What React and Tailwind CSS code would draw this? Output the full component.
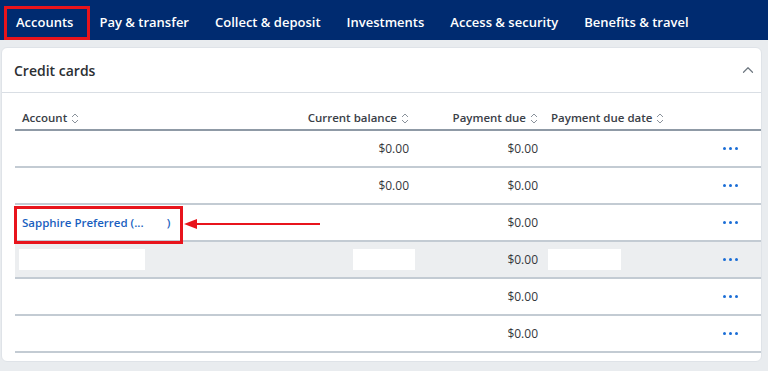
import { ChevronUp } from "lucide-react";

const tabs = [
  "Accounts",
  "Pay & transfer",
  "Collect & deposit",
  "Investments",
  "Access & security",
  "Benefits & travel",
];

function SortIcon() {
  return (
    <svg width="8" height="11" viewBox="0 0 8 11" className="ml-[4px] shrink-0">
      <path d="M1 4 L4 1 L7 4" fill="none" stroke="#8a929b" strokeWidth="1" />
      <path d="M1 7 L4 10 L7 7" fill="none" stroke="#8a929b" strokeWidth="1" />
    </svg>
  );
}

function Dots() {
  return (
    <div className="flex gap-[3px]">
      <span className="w-[3px] h-[3px] rounded-full bg-[#1a6dd6]" />
      <span className="w-[3px] h-[3px] rounded-full bg-[#1a6dd6]" />
      <span className="w-[3px] h-[3px] rounded-full bg-[#1a6dd6]" />
    </div>
  );
}

const rows = [
  { account: "", balance: "$0.00", due: "$0.00" },
  { account: "", balance: "$0.00", due: "$0.00" },
  { account: "sapphire", balance: "", due: "$0.00" },
  { account: "masked", balance: "", due: "$0.00", gray: true },
  { account: "", balance: "", due: "$0.00" },
  { account: "", balance: "", due: "$0.00" },
];

const cols = "grid grid-cols-[286px_115px_129px_156px_51px]";

export default function App() {
  return (
    <div
      className="w-[768px] h-[371px] bg-[#e9ecef] overflow-hidden"
      style={{ fontFamily: '"Open Sans", "Liberation Sans", sans-serif' }}
    >
      {/* NAV */}
      <div className="relative h-[40px] bg-[#002b70] flex items-center pl-[16px] gap-[26px] pt-[5px]">
        {tabs.map((t) => (
          <span key={t} className="text-white text-[13px] font-semibold whitespace-nowrap">
            {t}
          </span>
        ))}
        <div className="absolute left-[43px] top-[37px] w-[10px] h-[2px] bg-white" />
        <div className="absolute left-[4px] top-[6px] w-[86px] h-[34px] border-[3px] border-[#e8141c]" />
      </div>

      {/* CARD */}
      <div className="ml-[1px] mt-[7px] w-[761px] h-[315px] bg-white rounded-[6px] border border-[#dfe3e8]">
        <div className="h-[45px] flex items-center justify-between pl-[12px] pr-[4px] border-b border-[#d9dee4]">
          <span className="text-[14px] font-semibold text-[#2b2f33]">Credit cards</span>
          <ChevronUp size={18} strokeWidth={1.6} className="text-[#6f7881]" />
        </div>

        <div className="relative pl-[13px] pt-[14px] text-[11.5px] text-[#33373b]">
          <div className={`${cols} h-[24px] items-center border-b-2 border-[#8f9aa6] font-semibold text-[#3a4047]`}>
            <div className="flex items-center pl-[7px]">
              Account <SortIcon />
            </div>
            <div className="flex items-center justify-end pr-[7px]">
              Current balance <SortIcon />
            </div>
            <div className="flex items-center justify-end pr-[7px]">
              Payment due <SortIcon />
            </div>
            <div className="flex items-center pl-[6px]">
              Payment due date <SortIcon />
            </div>
            <div />
          </div>

          {rows.map((r, i) => (
            <div
              key={i}
              className={`${cols} h-[37px] items-center border-b-2 border-[#c3cbd3] ${r.gray ? "bg-[#eceef0]" : ""}`}
            >
              <div className="pl-[7px] flex items-center">
                {r.account === "sapphire" && (
                  <span className="text-[#1a5fc0] font-semibold whitespace-nowrap">
                    Sapphire Preferred (...<span className="inline-block w-[23px]" />)
                  </span>
                )}
                {r.account === "masked" && (
                  <div className="ml-[-3px] w-[126px] h-[21px] bg-white" />
                )}
              </div>
              <div className="flex justify-end pr-[7px] text-[12px]">
                {r.balance}
                {r.gray && <div className="w-[62px] h-[21px] bg-white mr-[-6px]" />}
              </div>
              <div className="flex justify-end pr-[7px] text-[12px]">{r.due}</div>
              <div className="pl-[3px]">
                {r.gray && <div className="w-[73px] h-[21px] bg-white" />}
              </div>
              <div className="flex justify-end pr-[14px]">
                <Dots />
              </div>
            </div>
          ))}

          {/* annotation */}
          <div className="absolute left-[12px] top-[113px] w-[169px] h-[38px] border-[3px] border-[#e8141c]" />
          <div className="absolute left-[182px] top-[126px] flex items-center">
            <div className="w-0 h-0 border-y-[5px] border-y-transparent border-r-[13px] border-r-[#e8141c]" />
            <div className="w-[123px] h-[2px] bg-[#e8141c]" />
          </div>
        </div>
      </div>
    </div>
  );
}
